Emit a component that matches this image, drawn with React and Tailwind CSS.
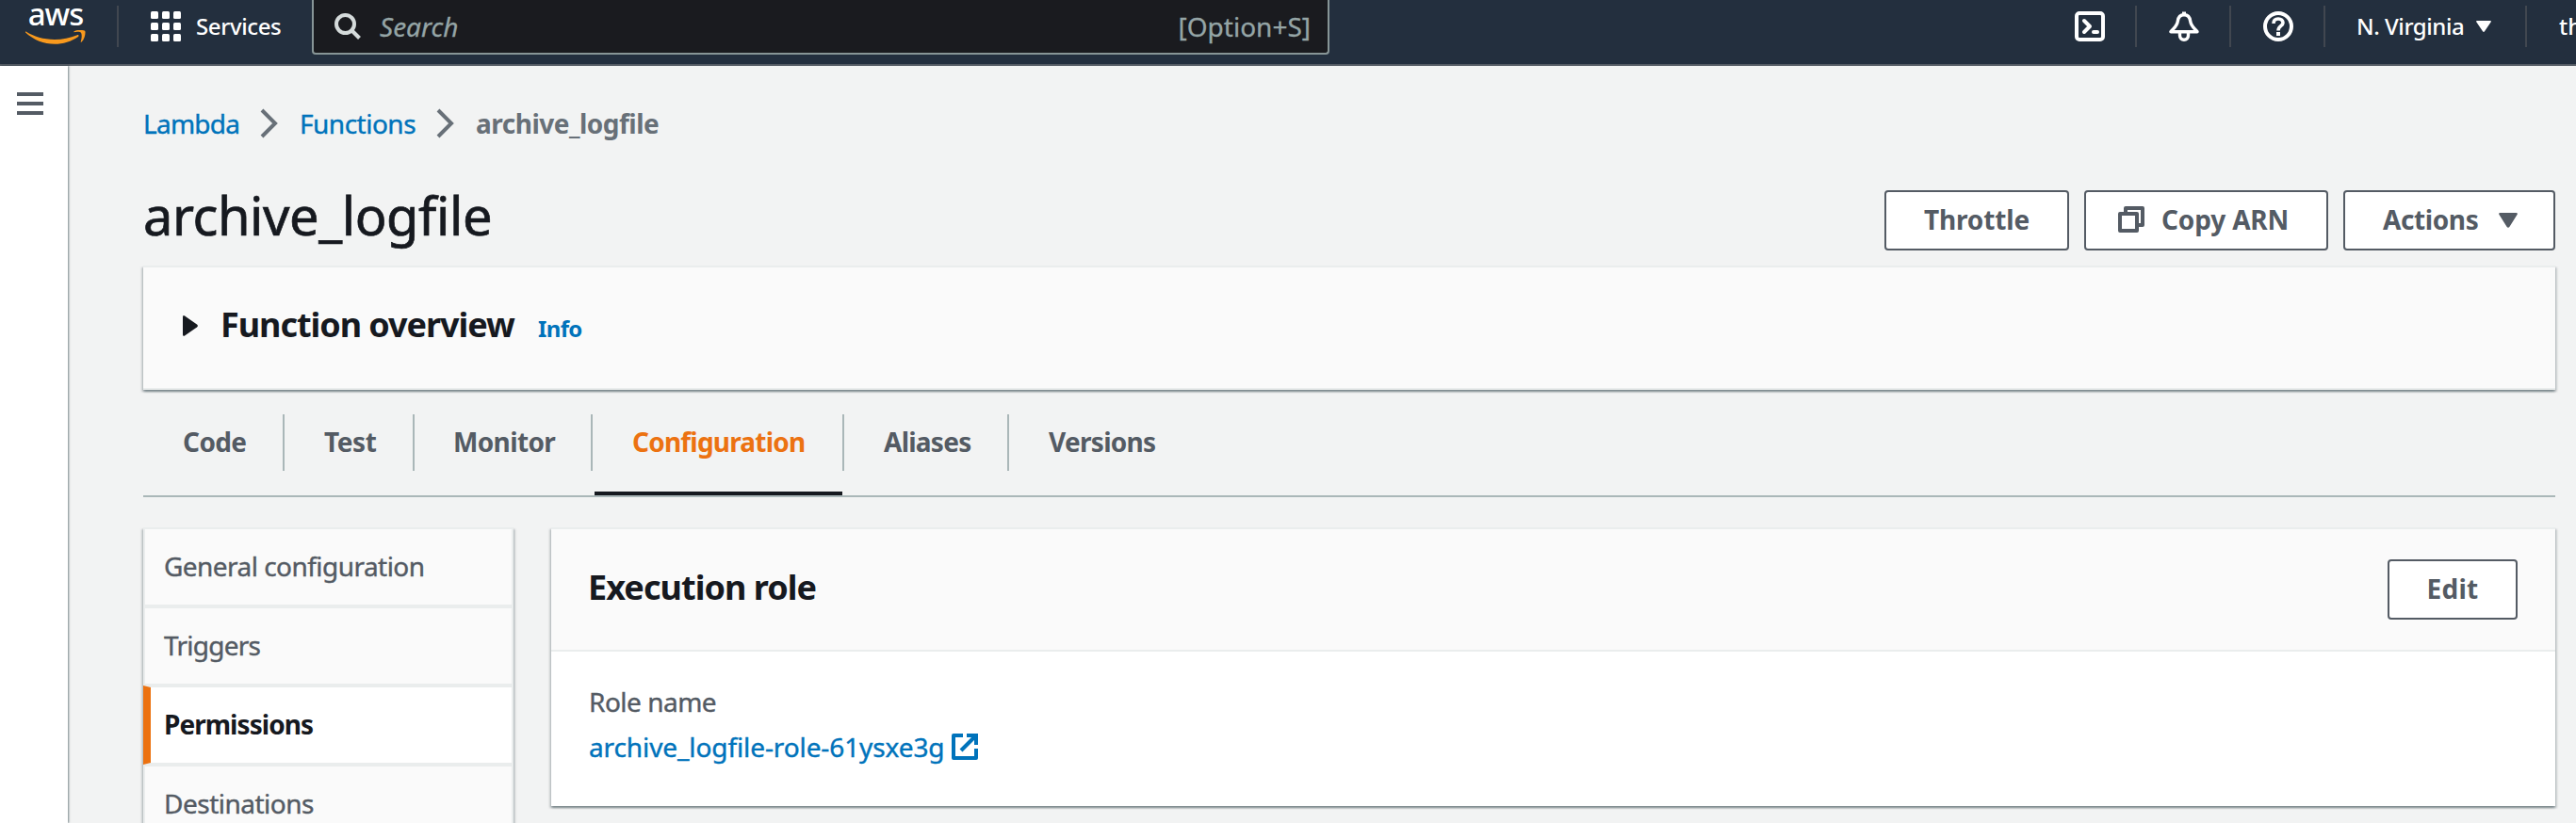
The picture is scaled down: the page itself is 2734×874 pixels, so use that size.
import React from "react";

const CARD_SHADOW = "shadow-[0_2px_2px_0_rgba(0,28,36,0.3),2px_2px_2px_0_rgba(0,28,36,0.15),-2px_2px_2px_0_rgba(0,28,36,0.15)]";

function AwsLogo() {
  return (
    <div className="flex w-[64px] shrink-0 flex-col items-center">
      <span className="h-[30px] text-[33px] leading-[30px] font-medium tracking-[-1px] text-white">aws</span>
      <svg viewBox="0 0 64 16" className="mt-[2px] h-[16px] w-[64px] shrink-0" fill="#f8991d">
        <path d="M0.6 1.6C9 7 19 10 31 10C39 10 47.500 8.300 55 5.200C56.200 4.700 57.200 6 56 6.900C49 12 39.600 14.700 31.200 14.700C19.400 14.700 8.800 10.400 0.300 2.700C-0.300 2.100 0 1.200 0.600 1.600Z" />
        <path d="M58.800 2.600C57.600 1.200 53.600 1.900 51.900 2.200C51.200 2.300 51.100 1.700 51.700 1.300C54.900 -0.900 60.200 -0.300 63.100 0.700C64.200 1.300 63.200 9.300 59.600 12.600C59 13.100 58.400 12.800 58.700 12.200C59.500 10.200 60.400 4.600 58.800 2.600Z" />
      </svg>
    </div>
  );
}

function Divider() {
  return <span className="h-11 w-[2px] shrink-0 bg-[#414750]" />;
}

function Header() {
  return (
    <header className="flex h-[70px] shrink-0 items-start border-b-2 border-[#545b64] bg-[#232f3e] text-white">
      <div className="flex h-14 w-[124px] shrink-0 items-start pl-[27px]">
        <AwsLogo />
      </div>
      <div className="flex h-14 w-[207px] shrink-0 items-center">
        <Divider />
        <svg viewBox="0 0 32 32" className="ml-[34px] h-8 w-8 shrink-0" fill="#fff">
          {[0, 12, 24].map((y) => [0, 12, 24].map((x) => <rect key={x + "-" + y} x={x} y={y} width="8" height="8" rx="1.500" />))}
        </svg>
        <span className="ml-4 text-[24px] leading-[56px] font-medium tracking-[-0.4px]">Services</span>
      </div>
      <div className="flex h-[58px] w-[1080px] shrink-0 items-center rounded-b-[4px] border-2 border-t-0 border-[#879596] bg-[#1a1b1f] pr-[18px] pl-[22px] text-[28px] leading-[56px] text-[#95a5a6] [-webkit-text-stroke:0.3px]">
        <svg viewBox="0 0 28 28" className="h-7 w-7 shrink-0" fill="none" stroke="#d5dbdb" strokeWidth="4">
          <circle cx="11.500" cy="11.500" r="9.500" />
          <path d="M18.500 18.500L26.500 26.500" />
        </svg>
        <span className="ml-5 grow italic">Search</span>
        <span>[Option+S]</span>
      </div>
      <div className="flex h-14 grow items-center justify-end overflow-hidden">
        <div className="flex w-[532px] shrink-0 items-center">
          <svg viewBox="0 0 32 32" className="h-8 w-8 shrink-0" fill="none" stroke="#fff" strokeWidth="4" strokeLinejoin="round">
            <rect x="2" y="2" width="28" height="28" rx="3" />
            <path d="M10 10L16 16L10 22" strokeLinecap="round" />
            <path d="M20 22H24" strokeLinecap="round" />
          </svg>
          <span className="ml-8 flex"><Divider /></span>
          <svg viewBox="0 0 32 32" className="ml-[34px] h-8 w-8 shrink-0" fill="none" stroke="#fff" strokeWidth="3.400" strokeLinejoin="round">
            <path d="M16 0.500V4" strokeWidth="4" />
            <path d="M16 3.700C12 3.700 9.800 6.500 9.300 10.500C8.700 15.500 5.500 17.500 2 21.700H30C26.500 17.500 23.300 15.500 22.700 10.500C22.200 6.500 20 3.700 16 3.700Z" />
            <path d="M11.500 22V25.500C11.500 28.500 13.500 30.200 16 30.200C18.500 30.200 20.500 28.500 20.500 25.500V22" />
          </svg>
          <span className="ml-8 flex"><Divider /></span>
          <svg viewBox="0 0 32 32" className="ml-[34px] h-8 w-8 shrink-0" fill="none" stroke="#fff" strokeWidth="4">
            <circle cx="16" cy="16" r="14" />
            <path d="M11 13C11 9.800 13 8 16 8C19 8 21 9.800 21 12.300C21 15.500 16 15.500 16 20.500" strokeWidth="3.600" />
            <path d="M16 22V26" />
          </svg>
          <span className="ml-8 flex"><Divider /></span>
          <span className="ml-[33px] w-[127px] shrink-0 text-[24px] leading-[56px] font-medium tracking-[-0.45px] whitespace-nowrap">N. Virginia</span>
          <svg viewBox="0 0 16 12" className="h-3 w-4 shrink-0" fill="#fff"><path d="M1 0H15Q16.500 0.300 15.600 1.500L9 11.300Q8 12.500 7 11.300L0.400 1.500Q-0.500 0.300 1 0Z" /></svg>
          <span className="ml-9 flex"><Divider /></span>
          <span className="ml-[34px] text-[24px] leading-[56px] font-medium">th</span>
        </div>
      </div>
    </header>
  );
}

function Chevron() {
  return (
    <svg viewBox="0 0 20 32" className="h-8 w-5 shrink-0" fill="none" stroke="#687078" strokeWidth="4">
      <path d="M2 2L16 16L2 30" />
    </svg>
  );
}

function Breadcrumbs() {
  return (
    <nav className="flex h-10 items-center text-[28px] leading-10 text-[#0073bb]">
      <span className="w-[124px] tracking-[-0.75px] [-webkit-text-stroke:0.4px]">Lambda</span>
      <Chevron />
      <span className="ml-[22px] w-[145px] tracking-[-0.5px] [-webkit-text-stroke:0.4px]">Functions</span>
      <Chevron />
      <span className="ml-[22px] font-bold tracking-[-0.5px] text-[#687078]">archive_logfile</span>
    </nav>
  );
}

function Button({ className, children }) {
  return (
    <button className={"flex h-16 shrink-0 items-center rounded-[4px] border-2 border-[#545b64] bg-white pb-[2px] text-[28px] leading-9 font-bold whitespace-nowrap text-[#545b64] " + className}>
      {children}
    </button>
  );
}

function TitleRow() {
  return (
    <div className="mt-[51px] flex h-16 items-center justify-between">
      <h1 className="pb-[12px] text-[56px] leading-[64px] tracking-[-0.45px] text-[#16191f] [-webkit-text-stroke:0.7px]">archive_logfile</h1>
      <div className="flex">
        <Button className="w-[196px] justify-center tracking-[-0.15px]">Throttle</Button>
        <Button className="ml-4 w-[259px] pl-[34px] tracking-[-0.15px]">
          <svg viewBox="0 0 28 28" className="mr-[18px] h-7 w-7 shrink-0" fill="none" stroke="#545b64" strokeWidth="4" strokeLinejoin="round">
            <path d="M8 6V2H26V20H22" />
            <rect x="2" y="8" width="18" height="18" />
          </svg>
          Copy ARN
        </Button>
        <Button className="ml-4 w-[225px] pl-10 tracking-[-0.4px]">
          <span className="w-[123px] text-left">Actions</span>
          <svg viewBox="0 0 20 16" className="mt-[2px] h-4 w-5 shrink-0" fill="#545b64"><path d="M1.500 0H18.500Q20.600 0.300 19.500 2L11.500 14.800Q10 16.800 8.500 14.800L0.500 2Q-0.600 0.300 1.500 0Z" /></svg>
        </Button>
      </div>
    </div>
  );
}

function Overview() {
  return (
    <section className={"mt-4 flex h-[132px] items-center border-y-2 border-[#eaeded] bg-[#fafafa] pb-[3px] pl-[42px] " + CARD_SHADOW}>
      <svg viewBox="0 0 16 22" className="mb-[2px] h-[22px] w-4 shrink-0" fill="#16191f"><path d="M0 1.500Q0.300 -0.600 2 0.500L15 9.500Q16.800 11 15 12.500L2 21.500Q0.300 22.600 0 20.500Z" /></svg>
      <div className="ml-6 flex items-baseline">
        <h2 className="w-[337px] text-[36px] leading-[44px] font-bold tracking-[-1.050px] text-[#16191f]">Function overview</h2>
        <span className="text-[24px] leading-[44px] font-bold tracking-[-0.650px] text-[#0073bb]">Info</span>
      </div>
    </section>
  );
}

const TABS = [
  { label: "Code", box: "w-[150px] pl-[42px]", text: "tracking-[-0.600px]" },
  { label: "Test", box: "w-[138px] pl-[42px]", text: "tracking-[-0.400px]" },
  { label: "Monitor", box: "w-[189px] pl-[41px]", text: "tracking-[-0.650px]" },
  { label: "Configuration", box: "w-[267px] pl-[42px]", text: "tracking-[-0.800px] text-[#ec7211]", active: true },
  { label: "Aliases", box: "w-[175px] pl-[42px]", text: "tracking-[-0.750px]" },
  { label: "Versions", box: "w-[160px] pl-[42px]", text: "tracking-[-0.700px]" },
];

function Tabs() {
  return (
    <div className="mt-[24px] flex h-[90px] border-b-2 border-[#aab7b8] text-[28px] font-bold text-[#545b64]">
      {TABS.map((tab, i) => (
        <div key={tab.label} className="flex h-[88px] flex-col">
          <div className={"mt-[2px] flex h-[60px] items-center pb-[2px] " + tab.box + (i < TABS.length - 1 ? " border-r-2 border-[#aab7b8]" : "")}>
            <span className={tab.text}>{tab.label}</span>
          </div>
          {tab.active && <span className="mt-[22px] mr-[2px] ml-[2px] h-1 bg-[#16191f]" />}
        </div>
      ))}
    </div>
  );
}

const NAV = [
  { label: "General configuration", text: "tracking-[-0.540px]" },
  { label: "Triggers", text: "tracking-[-0.750px]" },
  { label: "Permissions", text: "tracking-[-0.950px]", active: true },
  { label: "Destinations", text: "tracking-[-0.500px]" },
];

function SideNav() {
  return (
    <ul className={"h-[336px] w-[393px] shrink-0 text-[28px] leading-10 text-[#545b64] " + CARD_SHADOW}>
      {NAV.map((item) => (
        <li
          key={item.label}
          className={"flex h-[84px] items-center border-2 border-[#eaeded] pb-[2px] " + (item.active ? "border-l-8 border-l-[#ec7211] bg-white pl-[14px] font-bold text-[#16191f]" : "bg-[#fafafa] pl-[20px] [-webkit-text-stroke:0.4px]")}
        >
          <span className={item.text}>{item.label}</span>
        </li>
      ))}
    </ul>
  );
}

function ExecutionRole() {
  return (
    <section className={"h-[296px] grow bg-white " + CARD_SHADOW}>
      <div className="flex h-[132px] items-center justify-between border-y-2 border-[#eaeded] bg-[#fafafa] pr-10 pl-[39px]">
        <h2 className="pb-[5px] text-[36px] leading-[44px] font-bold tracking-[-0.950px] text-[#16191f]">Execution role</h2>
        <Button className="w-[138px] justify-center tracking-[0.300px]">Edit</Button>
      </div>
      <div className="pt-[33px] pl-10 text-[28px] leading-10 [-webkit-text-stroke:0.4px]">
        <div className="tracking-[-0.500px] text-[#545b64]">Role name</div>
        <div className="mt-2 flex items-center text-[#0073bb]">
          <span className="w-[385px] tracking-[-0.100px] whitespace-nowrap">archive_logfile-role-61ysxe3g</span>
          <svg viewBox="0 0 28 28" className="h-7 w-7 shrink-0" fill="none" stroke="#0073bb" strokeWidth="4">
            <path d="M12 2H2V26H26V16" strokeLinejoin="round" />
            <path d="M16 2H26V12" />
            <path d="M26 2L10 18" />
          </svg>
        </div>
      </div>
    </section>
  );
}

export default function App() {
  return (
    <div className="flex h-[874px] w-full flex-col overflow-hidden bg-[#f2f3f3] font-['Noto_Sans','Open_Sans',sans-serif]">
      <Header />
      <div className="flex grow">
        <aside className="w-[72px] shrink-0 bg-white pt-7 pl-[18px] shadow-[1px_0_2px_0_rgba(0,28,36,0.5)]">
          <svg viewBox="0 0 28 24" className="h-6 w-7" fill="#545b64">
            <rect width="28" height="4" />
            <rect y="10" width="28" height="4" />
            <rect y="20" width="28" height="4" />
          </svg>
        </aside>
        <main className="h-[804px] grow overflow-hidden pt-[41px] pr-[22px] pl-20">
          <Breadcrumbs />
          <TitleRow />
          <Overview />
          <Tabs />
          <div className="mt-8 flex items-start gap-10">
            <SideNav />
            <ExecutionRole />
          </div>
        </main>
      </div>
    </div>
  );
}
